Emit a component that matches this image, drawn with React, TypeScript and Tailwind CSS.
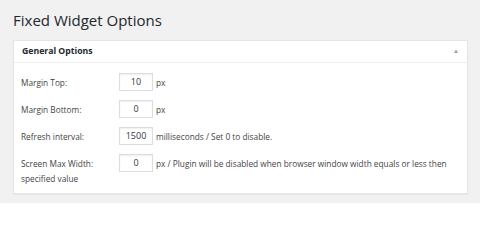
const rows: { label: string; value: string; note: string }[] = [
  { label: "Margin Top:", value: "10", note: "px" },
  { label: "Margin Bottom:", value: "0", note: "px" },
  { label: "Refresh interval:", value: "1500", note: "milliseconds / Set 0 to disable." },
  {
    label: "Screen Max Width:",
    value: "0",
    note: "px / Plugin will be disabled when browser window width equals or less then",
  },
];

export default function App() {
  return (
    <div className="w-[480px] h-[203px] bg-[#f1f1f1] text-[#444] font-['Open_Sans',sans-serif] overflow-hidden">
      <div className="px-[13px] pt-[9px]">
        <h1 className="text-[15px] leading-[22px] text-[#23282d] font-normal">Fixed Widget Options</h1>
      </div>
      <div className="mx-[13px] mt-[9px] w-[455px] bg-white border border-[#e5e5e5] shadow-[0_1px_1px_rgba(0,0,0,0.04)]">
        <div className="h-[22px] flex items-center justify-between pl-[8px] pr-[8px] border-b border-[#eee]">
          <span className="text-[8.7px] font-bold text-[#23282d]">General Options</span>
          <span className="text-[6px] text-[#999]">▲</span>
        </div>
        <div className="px-[7px] pt-[10px] pb-[6px]">
          {rows.map((r) => (
            <div key={r.label} className="h-[27px] flex items-start text-[8.3px] leading-[16px]">
              <div className="w-[98px] shrink-0 pt-[2px]">{r.label}</div>
              <div className="w-[34px] h-[18px] shrink-0 border border-[#ddd] shadow-[inset_0_1px_2px_rgba(0,0,0,0.07)] flex items-center justify-center text-[9px] text-[#32373c]">
                {r.value}
              </div>
              <div className="pl-[3px] pt-[2px] whitespace-nowrap">{r.note}</div>
            </div>
          ))}
          <div className="-mt-[10px] text-[8.3px] leading-[16px]">specified value</div>
        </div>
      </div>
    </div>
  );
}
